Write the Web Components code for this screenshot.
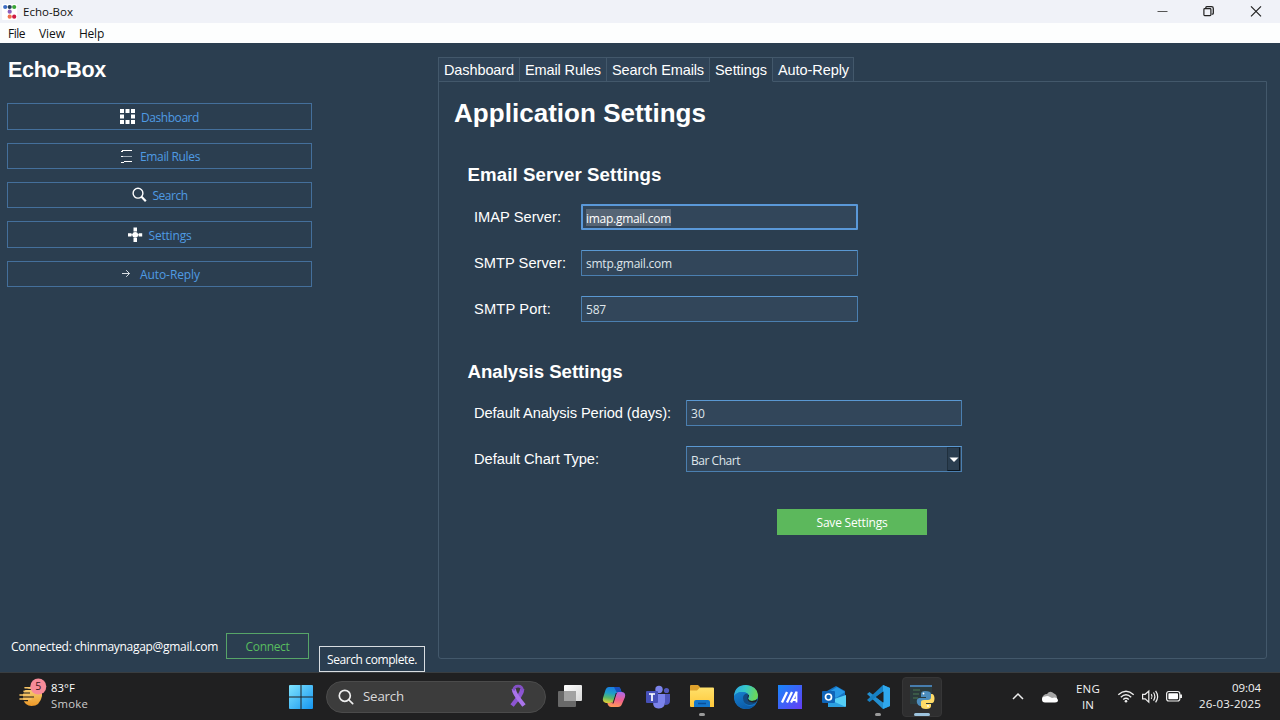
<!DOCTYPE html>
<html lang="en">
<head>
<meta charset="utf-8">
<title>Echo-Box</title>
<style>
html,body{margin:0;height:100%;overflow:hidden;background:#2b3e50}
</style>
</head>
<body>
<echo-desktop></echo-desktop>
<script>
const UI = '"Open Sans","Noto Sans",sans-serif';
const ARIAL = '"Liberation Sans",Arial,sans-serif';

function define(name, css, html, after) {
  const t = document.createElement('template');
  t.innerHTML = `<style>*{box-sizing:border-box}${css}</style>${html}`;
  customElements.define(name, class extends HTMLElement {
    connectedCallback() {
      if (this.shadowRoot) return;
      this.attachShadow({ mode: 'open' }).append(t.content.cloneNode(true));
      if (after) after(this, this.shadowRoot);
    }
  });
}

/* A run of text tracked so that it fills the width given in "w". */
define('fit-text', `:host{display:inline-block;white-space:nowrap;flex:none}`,
  `<span><slot></slot></span>`, (el, root) => {
    const w = parseFloat(el.getAttribute('w'));
    el.style.width = w + 'px';
    const n = el.textContent.length;
    const natural = root.querySelector('span').getBoundingClientRect().width;
    el.style.letterSpacing = ((w - natural) / n).toFixed(4) + 'px';
  });

define('title-bar', `
  :host{display:flex;height:23px;background:#f0f2f8;color:#111;font:11.5px/23px ${UI};align-items:center}
  .logo{margin:0 6px 0 2px} .sp{flex:1} .win{display:block;margin-left:0}
`, `
  <svg class="logo" width="15" height="16" viewBox="0 0 15 16">
    <rect x="0" y="0" width="15" height="16" rx="1" fill="#fff"/>
    <circle cx="3.2" cy="3" r="2.1" fill="#3d6cc4"/><circle cx="7.7" cy="3" r="2.1" fill="#24405a"/><circle cx="12.2" cy="3" r="2.1" fill="#3aa537"/>
    <circle cx="7.7" cy="7.7" r="2.1" fill="#8d60bd"/><circle cx="7.7" cy="12.7" r="2.1" fill="#f0714c"/><circle cx="12.2" cy="12.7" r="2.1" fill="#cf1b45"/>
  </svg>
  <fit-text w="50">Echo-Box</fit-text><span class="sp"></span>
  <svg class="win" width="141" height="23" viewBox="0 0 141 23" fill="none" stroke="#222">
    <path d="M18.5 11.500h10" stroke="#555"/>
    <path d="M66.8 8.8v-1.1q0-1 1-1h4.7q1.8 0 1.8 1.8v4.7q0 1-1 1h-.6" stroke-width="1.3"/><rect x="64.9" y="8.6" width="7" height="7" rx=".8" stroke-width="1.2"/>
    <path d="M112 6.3l10 10M122 6.3l-10 10" stroke-width="1.2"/>
  </svg>`);

define('menu-bar', `
  :host{display:flex;gap:14px;height:20px;padding:1px 0 0 8px;background:#fdfefe;color:#111;font:12px/20px ${UI}}
`, `<fit-text w="17">File</fit-text><fit-text w="26">View</fit-text><fit-text w="25">Help</fit-text>`);

define('nav-button', `
  :host{display:flex;align-items:center;justify-content:center;gap:5px;border:1px solid #446f9b;color:#4f9be3;font:12px/24px ${UI}}
  ::slotted(svg){display:block;flex:none}
  ::slotted(fit-text){padding-top:2px}
`, `<slot></slot>`);

define('side-panel', `
  :host{display:flex;flex-direction:column;width:319px;padding:15px 7px 0;color:#fff}
  h1{margin:0 0 0 1px;font:bold 21.5px/25px ${ARIAL};height:45px}
  nav{display:grid;grid-template-rows:27px 26px 26px 27px 26px;row-gap:13px}
  .foot{display:flex;margin:auto 0 12px 4px;align-items:center;font:12px/26px ${UI};gap:8px}
  .who{padding-top:2px}
  .connect{border:1px solid #57a568;color:#58bd5f;width:83px;height:26px;line-height:25px;text-align:center}
`, `
  <h1><fit-text w="98">Echo-Box</fit-text></h1>
  <nav>
    <nav-button><svg width="16" height="16" fill="#fff"><path d="M0 0h4v4H0zM5.5 0h4v4h-4zM11 0h4v4h-4zM0 5.5h4v4H0zM11 5.5h4v4h-4zM0 11h4v4H0zM5.5 11h4v4h-4zM11 11h4v4h-4z"/></svg><fit-text w="58">Dashboard</fit-text></nav-button>
    <nav-button><svg width="16" height="16" fill="none" stroke="#fff"><path d="M3 2.500h10M2 14.500h3M5 13.500h8"/><path d="M2 3.500h2M2 8.500h2"/><path d="M4 8.500h9" stroke="#9ca8b3"/></svg><fit-text w="60">Email Rules</fit-text></nav-button>
    <nav-button><svg width="16" height="16" fill="none" stroke="#fff"><circle cx="6" cy="6.2" r="4.9" stroke-width="1.4"/><path d="M9.5 9.7l4.3 4.5" stroke-width="2.2"/></svg><fit-text w="35">Search</fit-text></nav-button>
    <nav-button><svg width="16" height="16" fill="#fff"><path d="M5.500 .5H9v4H5.500zM5.500 11H9v4H5.500zM0 6.2h3.500v3.200H0zM10.700 6.2h3.500v3.200h-3.500z"/><circle cx="7.2" cy="7.8" r="2.9"/><path d="M3 7.3h9v1H3z"/></svg><fit-text w="43">Settings</fit-text></nav-button>
    <nav-button><svg width="16" height="16" fill="none" stroke="#d8dee4"><path d="M3 7.5h7.5M7.2 4.2l3.3 3.3-3.3 3.3"/></svg><fit-text w="60">Auto-Reply</fit-text></nav-button>
  </nav>
  <div class="foot"><fit-text class="who" w="207">Connected: chinmaynagap@gmail.com</fit-text><div class="connect"><fit-text w="44">Connect</fit-text></div></div>`);

define('status-tip', `
  :host{display:block;align-self:flex-end;width:106px;height:26px;border:1px solid #d9dde1;color:#fff;font:12px/26px ${UI};padding-left:7px}
`, `<fit-text w="90">Search complete.</fit-text>`);

define('tab-strip', `
  :host{display:flex;height:25px;position:relative;z-index:1;color:#fff;font:14.5px/25px ${ARIAL}}
  div{height:25px;border:1px solid #43586b;border-left-width:0;padding-left:5px;background:#2f4357;line-height:24px}
  div:first-of-type{border-left-width:1px}
  .on{border-bottom-color:#2b3e50;background:#2b3e50}
`, `
  <div style="width:82px"><fit-text w="70">Dashboard</fit-text></div><div style="width:87px"><fit-text w="76">Email Rules</fit-text></div><div style="width:103px"><fit-text w="92">Search Emails</fit-text></div><div class="on" style="width:63px"><fit-text w="52">Settings</fit-text></div><div style="width:81px"><fit-text w="71">Auto-Reply</fit-text></div>`);

define('text-field', `
  :host{display:block;width:277px;height:27px;border:1px solid #4b7fb0;border-top-color:#5a98d2;background:#32465a;border-radius:1px;color:#dfe5ea;font:12px/27px ${UI};padding-left:4px}
  :host([focused]){border:2px solid #5a98d8;padding-left:3px}
  :host([focused]) ::slotted(*){background:#566575;line-height:17px;color:#fff;display:block;margin-top:3px;padding-top:1px;height:17px}
`, `<slot></slot>`);

define('select-field', `
  :host{display:flex;width:276px;height:26px;border:1px solid #4b7fb0;border-top-color:#5a98d2;background:#32465a;color:#dfe5ea;font:12px/27px ${UI};padding-left:4px;justify-content:space-between}
  i{display:block;width:13px;height:24px;border:1px solid #20303e;border-bottom-color:#0b1620;border-right-color:#0b1620;margin-right:1px;background:#2b3e50}
  svg{display:block}
`, `<slot></slot><i><svg width="11" height="22"><path d="M1.500 9.500h9l-4.500 4.500z" fill="#fff"/></svg></i>`);

define('settings-page', `
  :host{display:block;flex:1;margin-top:-1px;border:1px solid #43586b;border-radius:0 0 3px 3px;padding:16px 0 0 15px;color:#fff;font:14.67px/26px ${ARIAL}}
  h2{margin:0;font:bold 26px/30px ${ARIAL};height:64px}
  h3{margin:0 0 0 13.500px;font:bold 18.67px/26px ${ARIAL};height:42px}
  .form{display:grid;row-gap:20px;margin-left:20px;justify-items:start}
  .a{grid-template-columns:107px 277px;grid-auto-rows:26px;height:155px;align-content:start}
  .b{grid-template-columns:212px 276px;grid-auto-rows:26px;margin-top:-1px}
  text-field{height:26px;line-height:26px} .b text-field{width:276px}
  .save{width:150px;height:26px;margin:37px 0 0 323px;background:#5cb85c;font:12px/27px ${UI};text-align:center}
`, `
  <h2><fit-text w="252">Application Settings</fit-text></h2>
  <h3><fit-text w="194">Email Server Settings</fit-text></h3>
  <div class="form a">
    <fit-text w="87">IMAP Server:</fit-text><text-field focused><fit-text w="85">imap.gmail.com</fit-text></text-field>
    <fit-text w="92">SMTP Server:</fit-text><text-field><fit-text w="86">smtp.gmail.com</fit-text></text-field>
    <fit-text w="77">SMTP Port:</fit-text><text-field><fit-text w="20">587</fit-text></text-field>
  </div>
  <h3><fit-text w="155">Analysis Settings</fit-text></h3>
  <div class="form b">
    <fit-text w="197">Default Analysis Period (days):</fit-text><text-field><fit-text w="14">30</fit-text></text-field>
    <fit-text w="125">Default Chart Type:</fit-text><select-field><fit-text w="49">Bar Chart</fit-text></select-field>
  </div>
  <div class="save"><fit-text w="71">Save Settings</fit-text></div>`);

define('note-book', `
  :host{display:flex;flex-direction:column;width:829px;margin:14px 0 13px 13px}
`, `<tab-strip></tab-strip><settings-page></settings-page>`);

define('task-icon', `
  :host{display:grid;place-items:center;width:44px;height:48px;flex:none;position:relative}
  ::slotted(svg){display:block}
  :host([running])::after,:host([active])::after{content:"";position:absolute;left:19px;bottom:5px;width:6px;height:3px;border-radius:2px;background:#9a9a9a}
  :host([active])::after{left:14px;width:16px;background:#9dc3dd}
  :host([active])::before{content:"";position:absolute;inset:4px 2px;border-radius:4px;background:#2e2e2f;border:1px solid #363637}
  slot{position:relative} ::slotted(svg){position:relative}
`, `<slot></slot>`);

define('search-pill', `
  :host{display:flex;align-items:center;width:220px;height:32px;margin:0 2px 0 3px;border:1px solid #4b4b4b;border-radius:16px;background:#3c3c3c;color:#d9d9d9;font:13.3px/30px ${UI};padding:0 18px 0 11px}
  fit-text{margin-left:9px;padding-bottom:2px} .r{margin-left:auto}
`, `
  <svg width="16" height="16" fill="none" stroke="#eee" stroke-width="1.7" stroke-linecap="round"><circle cx="6.8" cy="6.8" r="5.5"/><path d="M11 11l3.7 3.7"/></svg>
  <fit-text w="41">Search</fit-text>
  <svg class="r" width="18" height="25" viewBox="0 0 18 25" fill="none">
    <path d="M13.300 5C13 10 8.500 15 3 21.500" stroke="#8d55d3" stroke-width="4.200"/>
    <path d="M4.800 5C5 10 10 15 15 21.500" stroke="#a974ea" stroke-width="4.200"/>
    <path d="M4.600 6.500Q5 2.200 9.100 2.200T13.500 6.500" stroke="#8250c4" stroke-width="2.800"/>
  </svg>`);

define('weather-widget', `
  :host{display:flex;width:279px;height:48px;padding-left:19px;color:#fff;font:11.3px/16px ${UI}}
  svg{margin-top:4px;flex:none} div{margin:7px 0 0 4px} fit-text{display:block} .m{color:#ccc}
`, `
  <svg width="28" height="32" viewBox="0 0 28 32">
    <defs><linearGradient id="s" x2="0" y2="1"><stop offset="0" stop-color="#f5d37b"/><stop offset="1" stop-color="#ee9826"/></linearGradient></defs>
    <path d="M4 17Q6 11 12 11H23V19Q21 29 12.500 29 6 29 4 22z" fill="url(#s)"/>
    <path d="M4 12.500h9M1 16h10M0 20h15M2 23.600h7" stroke="#1f1f20" stroke-width="1.100"/>
    <path d="M6 10.800h6M5 14.300h6M1 18h10M1 22h11" stroke="#f6c465" stroke-width="1.600" stroke-linecap="round"/>
    <circle cx="19.300" cy="9.500" r="8" fill="#f78b99"/>
    <text x="19.200" y="13.200" font-family="Open Sans" font-size="10.500" text-anchor="middle" fill="#3b1720">5</text>
  </svg>
  <div><fit-text w="24">83°F</fit-text><fit-text class="m" w="37">Smoke</fit-text></div>`);

define('system-tray', `
  :host{display:flex;margin-left:auto;width:278px;height:48px;align-items:center;color:#f3f3f3;font:11.5px/16px ${UI}}
  svg{display:block;flex:none}
  .lang{width:44px;text-align:center;margin-right:4px} .clock{width:75px;text-align:right;margin-top:-2px}
`, `
  <svg width="32" height="24" fill="none" stroke="#eee" stroke-width="1.5"><path d="M11 14l5-5 5 5"/></svg>
  <svg width="32" height="24"><path d="M8 14a5 5 0 0 1 5-5q3-4 7-.5 3 1 3 5L17 16z" fill="#a6a6a6"/><path d="M11 17.500a3 3 0 0 1 0-6 5 5 0 0 1 5 .5l2 1q5-1.500 6 2 0 2.500-3 2.500z" fill="#fff"/></svg>
  <div class="lang"><fit-text w="24">ENG</fit-text><br><fit-text w="12">IN</fit-text></div>
  <svg width="24" height="24" fill="none" stroke="#eee" stroke-width="1.4"><path d="M4.300 9.700q7.700-7 15.400 0M6.800 12.200q5.200-4.800 10.400 0M9.200 14.600q2.800-2.500 5.600 0"/><circle cx="12" cy="16.200" r="1.300" fill="#eee" stroke="none"/></svg>
  <svg width="24" height="24" fill="none" stroke="#eee" stroke-width="1.200"><path d="M4.600 9.300h2.600l3.600-3.200v11l-3.600-3.200H4.600zM13.300 9.200q1.500 2.300 0 4.700M15.500 7.500q2.700 4 0 8.100M17.600 5.800q4 5.700 0 11.500"/></svg>
  <svg width="24" height="24" fill="none" stroke="#eee" stroke-width="1.200"><rect x="4.600" y="6.500" width="13.200" height="9.500" rx="2.200"/><rect x="6.400" y="8.300" width="9.600" height="5.900" rx=".8" fill="#fff" stroke="none"/><path d="M19 9.500v3.500" stroke-width="2"/></svg>
  <div class="clock"><fit-text w="29">09:04</fit-text><br><fit-text w="62">26-03-2025</fit-text></div>`);

define('task-bar', `
  :host{display:flex;align-items:center;height:48px;background:#202021;border-top:1px solid #393d40}
`, `
  <weather-widget></weather-widget>
  <task-icon><svg width="24" height="24"><defs><linearGradient id="w" gradientUnits="userSpaceOnUse" x2="24" y2="24"><stop stop-color="#7fe4ff"/><stop offset="1" stop-color="#1595ef"/></linearGradient></defs><path d="M0 1q0-1 1-1h10.500v11.500H0zM12.500 0H23q1 0 1 1v10.500H12.500zM0 12.500h11.500V24H1q-1 0-1-1zM12.500 12.500H24V23q0 1-1 1H12.500z" fill="url(#w)"/></svg></task-icon>
  <search-pill></search-pill>
  <task-icon><svg width="24" height="24"><defs><linearGradient id="v" x2="1" y2="1"><stop stop-color="#fff"/><stop offset="1" stop-color="#d7d7d7"/></linearGradient></defs><rect x="6" y="0" width="18" height="16" rx="1" fill="url(#v)"/><rect x="0" y="6" width="18" height="16" rx="1" fill="#696969"/><rect x="6" y="6" width="12" height="10" fill="#a2a2a2"/></svg></task-icon>
  <task-icon><svg width="24" height="24"><defs><linearGradient id="a" x1=".3" x2=".1" y2="1"><stop stop-color="#1a7ee0"/><stop offset=".35" stop-color="#1f9ec8"/><stop offset=".65" stop-color="#58b96a"/><stop offset="1" stop-color="#f3d02f"/></linearGradient><linearGradient id="b" x1=".6" x2=".4" y2="1"><stop stop-color="#b069e6"/><stop offset=".5" stop-color="#ef5f8f"/><stop offset="1" stop-color="#ff9a58"/></linearGradient></defs><path d="M7 2h9q2 0 2.500 2l1 3h-3q-2 0-2.500 2l-2 6q-1 3-4 3H4q-4-1-3-5l2.500-8Q4.500 2 7 2z" fill="url(#a)"/><path d="M12 2h4q2 0 2.500 2l1 3h-5z" fill="#174ec0"/><path d="M16 22H9q-2 0-3-2l-.7-2H8q3 0 3.800-3L14 9q.6-2 2.500-2H20q4 .5 3 5l-3 7q-1 3-4 3z" fill="url(#b)"/><path d="M14.300 8L11 18.500" stroke="#202021" stroke-width="1"/></svg></task-icon>
  <task-icon><svg width="26" height="24" viewBox="0 0 26 24"><circle cx="21.500" cy="5.500" r="2.600" fill="#5359bd"/><path d="M18 9h7v7q0 4-5 4z" fill="#4e55bc"/><circle cx="14" cy="4.500" r="3.700" fill="#7b83eb"/><path d="M8 9h12v8q0 6-6 6.500T8 17z" fill="#7b83eb"/><rect x="1" y="6" width="12" height="12" rx="1" fill="#4650b8"/><path d="M4 9h6M7 9v7" stroke="#fff" stroke-width="1.700"/></svg></task-icon>
  <task-icon running><svg width="24" height="24"><defs><linearGradient id="f" x2="0" y2="1"><stop stop-color="#ffe16b"/><stop offset="1" stop-color="#ffc83a"/></linearGradient></defs><path d="M0 1q0-1 1-1h7l2 2v4H0z" fill="#dea12c"/><path d="M0 5.500h7L10 2.500h13q1 0 1 1V22H1q-1 0-1-1z" fill="url(#f)"/><path d="M4 22v-5q0-2 2-2h12q2 0 2 2v5z" fill="#1477cb"/><path d="M8 18.500h8" stroke="#0b4f98" stroke-width="1.500"/></svg></task-icon>
  <task-icon><svg width="24" height="24"><defs><linearGradient id="e" x2="1" y2=".2"><stop stop-color="#2ba6e5"/><stop offset=".5" stop-color="#36c7c9"/><stop offset="1" stop-color="#6ad65b"/></linearGradient><linearGradient id="g" x2=".5" y2="1"><stop stop-color="#1781cf"/><stop offset="1" stop-color="#0b5aa8"/></linearGradient></defs><circle cx="12" cy="12" r="12" fill="#1678c9"/><path d="M0 11Q1 0 12 0q11 1 12 10 0 6-6 6-4 0-4-2 1-1 1-3-1-4-7-4-5 0-8 4z" fill="url(#e)"/><path d="M0 12q2-5 8-5 4 0 6 2-4-.5-5 4 0 7 7 8 3 0 6-2-4 5-10 5Q1 23 0 12z" fill="url(#g)"/><path d="M9 13q0-4 4-4.500 2 1 2 3-1 1-1 2 0 2.500 4 2.500 3 0 5-2l-1 4q-4 2.500-7 2-6-1-6-7z" fill="#124b83"/><path d="M15 10q-1 2-1 3.500 1 2.500 4 2.500 3 0 5.500-2l-1 2.500q-3 1.500-6 .5-4-1-2.500-7z" fill="#202021"/></svg></task-icon>
  <task-icon><svg width="24" height="24"><defs><linearGradient id="m" x2="1" y2="1"><stop stop-color="#1787fa"/><stop offset="1" stop-color="#653cf5"/></linearGradient></defs><path d="M0 0h24v24H0z" fill="url(#m)"/><path d="M4 17.500L9 7M9 17.500L14 7M13 17.500L18.500 7" stroke="#fff" stroke-width="2.300"/><path d="M18.500 6.500v11M14 15h4" stroke="#fff" stroke-width="1.800"/></svg></task-icon>
  <task-icon><svg width="24" height="24"><path d="M5 6L14 1l9 5v6L13 16 5 12z" fill="#1473c5"/><path d="M7 7l8-5 8 5-9 6z" fill="#2899e6"/><path d="M24 10v11q0 1-1 1H7q-1 0-1-1v-5z" fill="#55cef5"/><path d="M6 14l18 8H7q-1 0-1-1z" fill="#2b9fe0"/><rect x="0" y="6" width="13" height="12" rx="1" fill="#0f64b8"/><circle cx="6.500" cy="12" r="3" fill="none" stroke="#fff" stroke-width="1.700"/></svg></task-icon>
  <task-icon running><svg width="24" height="24"><path d="M17 0l7 3v18l-7 3L1 9l2.500-2L19 19" fill="#238fd0"/><path d="M17 0L1 15l2.500 2L18 6z" fill="#1681c4"/><path d="M17 0l7 3v18l-7 3z" fill="#2fa8ed"/><path d="M17.500 6.500L10 12l7.500 5.500z" fill="#202021"/></svg></task-icon>
  <task-icon active><svg width="26" height="25" viewBox="0 0 26 25"><rect x="1" y="1" width="22" height="19" fill="#2b3a3c"/><path d="M1 2h22" stroke="#477dae" stroke-width="2"/><path d="M4 6h7M4 10h6M4 14h5" stroke="#4b7952"/><path d="M15 8q-4 0-4 3v3h5v1H9q-3 1-2 5 1 3 3 3h1v-3q0-2 3-2h4q3 0 3-3v-4q0-3-6-3z" transform="translate(1 -1)" fill="#4c8cbc"/><path d="M21 11h1q2 0 2.500 4 0 5-2.500 5h-6v1h5v2q0 3-5 3-5 0-5-3v-4q0-2 3-2h4q3 0 3-3z" transform="translate(1 -1)" fill="#ffdb67"/><circle cx="14.500" cy="9.500" r=".9" fill="#fff"/><circle cx="19" cy="22" r=".9" fill="#fff"/></svg></task-icon>
  <system-tray></system-tray>`);

define('echo-desktop', `
  :host{display:flex;flex-direction:column;width:1280px;height:720px;background:#2b3e50}
  main{display:flex;flex:1;min-height:0;align-items:stretch}
`, `<title-bar></title-bar><menu-bar></menu-bar><main><side-panel></side-panel><status-tip></status-tip><note-book></note-book></main><task-bar></task-bar>`);
</script>
</body>
</html>
